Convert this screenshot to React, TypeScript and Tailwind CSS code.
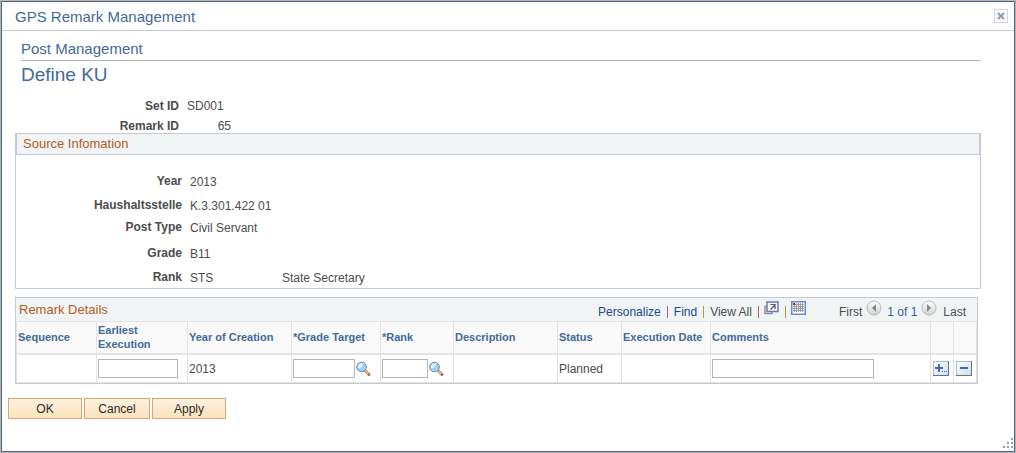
import type { ReactNode } from "react";

type Field = {
  label: string;
  value: string;
  extra?: string;
  className: string;
};

const sourceFields: Field[] = [
  { label: "Year", value: "2013", className: "h-6" },
  { label: "Haushaltsstelle", value: "K.3.301.422 01", className: "h-6" },
  { label: "Post Type", value: "Civil Servant", className: "h-5" },
  { label: "Grade", value: "B11", className: "h-8" },
  { label: "Rank", value: "STS", extra: "State Secretary", className: "h-4" },
];

const columns = [
  { title: "Sequence", width: "w-[80px]" },
  { title: "Earliest Execution", width: "w-[91px]" },
  { title: "Year of Creation", width: "w-[104px]" },
  { title: "*Grade Target", width: "w-[89px]" },
  { title: "*Rank", width: "w-[73px]" },
  { title: "Description", width: "w-[104px]" },
  { title: "Status", width: "w-[64px]" },
  { title: "Execution Date", width: "w-[89px]" },
  { title: "Comments", width: "" },
  { title: "", width: "w-[23px]" },
  { title: "", width: "w-[24px]" },
];

const inputClass = "block h-[19px] border border-[#b5b5b5] bg-white px-1 text-xs text-[#4c4c4c] outline-none";

function LookupIcon() {
  return (
    <svg width="15" height="16" viewBox="0 0 15 16" fill="none">
      <path d="M9 9.5l4.5 4.5" stroke="#9a7a66" strokeWidth="3" />
      <path d="M9 9.5l4 4" stroke="#f5b06a" strokeWidth="2" />
      <path d="M12.3 13l1.5 1.5" stroke="#7072a0" strokeWidth="2.4" />
      <circle cx="5.5" cy="6" r="4.8" fill="#9bd3fa" stroke="#7389a0" strokeWidth="1" />
      <path d="M2 7.2A3.8 3.8 0 0 1 7.5 2.8L5 6.4z" fill="#e6f6ff" />
    </svg>
  );
}

function ZoomGridIcon() {
  return (
    <svg width="15" height="14" viewBox="0 0 15 14" fill="none">
      <path d="M3 5.5H1V12.5h7V11" stroke="#8b8d98" strokeWidth="1.5" />
      <rect x="3" y="1" width="11" height="9.5" fill="#f2f6fc" stroke="#7079ad" strokeWidth="1.5" />
      <path d="M6.5 8.5l4-4M6.5 3.5h4.5v4.5" stroke="#4f5770" strokeWidth="1.2" />
    </svg>
  );
}

function DownloadIcon() {
  return (
    <svg width="15" height="14" viewBox="0 0 15 14">
      <rect x=".75" y=".75" width="13.5" height="12.5" fill="#fff" stroke="#5a8edb" strokeWidth="1.5" />
      <path
        d="M2 3.5h11M2 5.5h11M2 7.5h11M2 9.5h11M3.5 2v9M5.5 2v9M7.5 2v9M9.5 2v9M11.5 2v9"
        stroke="#8c9099"
        strokeWidth=".8"
      />
      <rect x="2" y="2" width="2" height="2" fill="#f00" />
    </svg>
  );
}

function ArrowIcon({ next = false }: { next?: boolean }) {
  return (
    <svg width="16" height="16" viewBox="0 0 16 16">
      <defs>
        <linearGradient id={next ? "next" : "prev"} x1="0" y1="0" x2="0" y2="1">
          <stop offset="0" stopColor="#fff" />
          <stop offset="1" stopColor="#d0d0d0" />
        </linearGradient>
      </defs>
      <circle cx="8" cy="8" r="7" fill={next ? "url(#next)" : "url(#prev)"} stroke="#b9b9b9" />
      <path d={next ? "M6 4l4 4-4 4z" : "M10 4L6 8l4 4z"} fill="#858585" />
    </svg>
  );
}

function RowIcon({ add = false }: { add?: boolean }) {
  return (
    <svg width="16" height="15" viewBox="0 0 16 15">
      <defs>
        <linearGradient id={add ? "add" : "remove"} x1="0" y1="0" x2="1" y2="1">
          <stop offset="0" stopColor="#fff" />
          <stop offset="1" stopColor="#cfdeec" />
        </linearGradient>
      </defs>
      <rect width="16" height="15" fill="#a9bfcb" />
      <path d="M0 14h15V0h1v15H0z" fill="#577986" />
      <rect x="1" y="1" width="14" height="13" fill={add ? "url(#add)" : "url(#remove)"} />
      {add ? (
        <>
          <path d="M2 6h3V3h2v3h3v2H7v3H5V8H2z" fill="#3c68b6" />
          <path d="M9 10h1v1H9zM11 10h1v1h-1zM13 10h1v1h-1z" fill="#3c68b6" />
        </>
      ) : (
        <rect x="4" y="6" width="8" height="2" fill="#3c68b6" />
      )}
    </svg>
  );
}

function Cell({ children }: { children?: ReactNode }) {
  return <td className="border-b border-l border-[#e3e3e3] pl-px last:border-r">{children}</td>;
}

function ActionButton({ children, className }: { children: ReactNode; className: string }) {
  return (
    <button
      type="button"
      className={`h-[21px] border border-[#dba573] bg-linear-to-b from-[#fef1df] to-[#fbe3bc] text-xs leading-none text-[#2b2b2b] ${className}`}
    >
      {children}
    </button>
  );
}

function Divider({ className }: { className: string }) {
  return <span className={`h-3 w-px ${className}`} />;
}

export default function App() {
  return (
    <div className="flex min-h-screen bg-[#a9b6c5] p-px font-['Liberation_Sans',Arial,sans-serif] text-xs text-[#4c4c4c]">
      <div role="dialog" aria-labelledby="dialog-title" className="relative w-full border border-[#5b636b] bg-white">
        <header className="flex h-[29px] items-center justify-between border-b border-[#c5c9d3] pr-[6px] pl-[13px]">
          <h1 id="dialog-title" className="pt-px text-[15px] text-[#426a9a]">GPS Remark Management</h1>
          <button type="button" aria-label="Close" className="flex size-[14px] items-center justify-center border border-[#d3d5d9] bg-[#fafafa]">
            <svg width="8" height="8" viewBox="0 0 8 8">
              <path d="M1 1l6 6M7 1L1 7" stroke="#8e9bad" strokeWidth="2" />
            </svg>
          </button>
        </header>

        <main className="pr-[33px] pl-[13px]">
          <div className="ml-[6px] pt-2">
            <h2 className="h-[22px] border-b border-[#b5b5b5] text-[15px] leading-5 text-[#426a9a]">Post Management</h2>
            <h3 className="text-[19px] leading-7 text-[#426a9a]">Define KU</h3>
          </div>

          <dl className="pt-[7px]">
            <div className="flex h-5 items-center">
              <dt className="w-[164px] text-right font-bold">Set ID</dt>
              <dd className="pl-2">SD001</dd>
            </div>
            <div className="flex h-5 items-center">
              <dt className="w-[164px] text-right font-bold">Remark ID</dt>
              <dd className="w-[52px] text-right">65</dd>
            </div>
          </dl>

          <section className="-mt-[3px] border border-[#c5c9d3] pb-[3px]">
            <h4 className="h-[21px] border-x border-b border-[#c5c9d3] bg-[#f0f4f5] pl-[6px] text-[13px] leading-5 text-[#b35b1c]">
              Source Infomation
            </h4>
            <dl className="pt-[14px]">
              {sourceFields.map((field) => (
                <div key={field.label} className={`flex items-center ${field.className}`}>
                  <dt className="w-[166px] text-right font-bold">{field.label}</dt>
                  <dd className="flex pt-px pl-2">
                    <span className="w-[92px]">{field.value}</span>
                    {field.extra && <span>{field.extra}</span>}
                  </dd>
                </div>
              ))}
            </dl>
          </section>

          <section className="mt-2 mr-[3px] border border-[#c5c9d3]">
            <div className="flex h-[23px] items-center justify-between bg-[#f0f4f5] pr-[11px] pl-[3px]">
              <h4 className="text-[13px] text-[#b35b1c]">Remark Details</h4>
              <div className="flex items-center">
                <div className="flex items-center gap-[6px] pt-1">
                  <a href="#personalize" className="text-[#1a4790]">Personalize</a>
                  <Divider className="bg-[#c65555]" />
                  <a href="#find" className="text-[#1a4790]">Find</a>
                  <Divider className="bg-[#b09a4a]" />
                  <span>View All</span>
                  <Divider className="bg-[#c65555]" />
                </div>
                <a href="#zoom" aria-label="Zoom grid" className="ml-[5px] pb-1"><ZoomGridIcon /></a>
                <Divider className="mt-1 ml-[6px] bg-[#b09a4a]" />
                <a href="#download" aria-label="Download" className="ml-[5px] pb-1"><DownloadIcon /></a>
                <div className="ml-[33px] flex items-center">
                  <span className="pt-1">First</span>
                  <button type="button" aria-label="Previous" className="ml-1 pb-1"><ArrowIcon /></button>
                  <span className="pt-1 pl-[5px] text-[#3b5f91]">1 of 1</span>
                  <button type="button" aria-label="Next" className="ml-1 pb-1"><ArrowIcon next /></button>
                  <span className="pt-1 pl-[6px]">Last</span>
                </div>
              </div>
            </div>

            <table className="w-full table-fixed border-separate border-spacing-0">
              <thead>
                <tr className="h-[34px] bg-[#f9f9f9] text-left text-[11px] leading-[14px] text-[#426a9a]">
                  {columns.map((column, i) => (
                    <th
                      key={i}
                      className={`border-t border-b-2 border-l border-[#e3e3e3] pb-[2px] pl-px font-bold last:border-r ${column.width}`}
                    >
                      {column.title}
                    </th>
                  ))}
                </tr>
              </thead>
              <tbody>
                <tr className="h-7">
                  <Cell />
                  <Cell><input aria-label="Earliest Execution" className={`${inputClass} w-[80px]`} /></Cell>
                  <Cell>2013</Cell>
                  <Cell>
                    <div className="flex items-center gap-px">
                      <input aria-label="Grade Target" className={`${inputClass} w-[62px]`} />
                      <button type="button" aria-label="Look up Grade Target"><LookupIcon /></button>
                    </div>
                  </Cell>
                  <Cell>
                    <div className="flex items-center gap-px">
                      <input aria-label="Rank" className={`${inputClass} w-[46px]`} />
                      <button type="button" aria-label="Look up Rank"><LookupIcon /></button>
                    </div>
                  </Cell>
                  <Cell />
                  <Cell>Planned</Cell>
                  <Cell />
                  <Cell><input aria-label="Comments" className={`${inputClass} w-[162px]`} /></Cell>
                  <Cell>
                    <button type="button" aria-label="Add row" className="ml-px block"><RowIcon add /></button>
                  </Cell>
                  <Cell>
                    <button type="button" aria-label="Delete row" className="ml-px block"><RowIcon /></button>
                  </Cell>
                </tr>
              </tbody>
            </table>
          </section>
        </main>

        <footer className="flex gap-[2px] px-[6px] pt-[14px] pb-8">
          <ActionButton className="w-[74px]">OK</ActionButton>
          <ActionButton className="w-[66px]">Cancel</ActionButton>
          <ActionButton className="w-[74px]">Apply</ActionButton>
        </footer>

        <svg className="absolute right-px bottom-[3px]" width="10" height="10" viewBox="0 0 10 10">
          <path d="M8 0h2v2H8zM4 4h2v2H4zM8 4h2v2H8zM0 8h2v2H0zM4 8h2v2H4zM8 8h2v2H8z" fill="#959cae" />
        </svg>
      </div>
    </div>
  );
}
